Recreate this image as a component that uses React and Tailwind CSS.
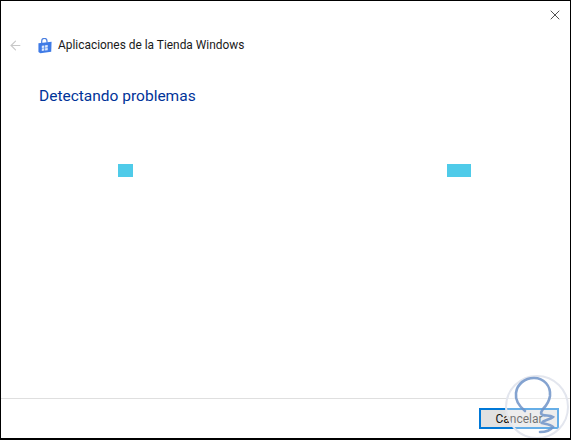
import React from "react";
import { ArrowLeft, X } from "lucide-react";

const StoreIcon = () => (
  <svg width="16" height="16" viewBox="0 0 16 17" className="shrink-0">
    <path d="M4.5 5.5V3.2a2.8 2.8 0 0 1 5.6 0V5" fill="none" stroke="#4a7fe0" strokeWidth="1.3" />
    <path d="M1 5.5L15 4l-.4 10.5L3 16.3 1 15z" fill="#3f7be6" />
    <path d="M4.6 8.2l2.7-.3v2.5l-2.7.2zM8.1 7.8l2.8-.3v2.7l-2.8.2zM4.6 11.1l2.7-.2v2.5l-2.7.3zM8.1 10.8l2.8-.2v2.5l-2.8.3z" fill="#dfeafc" />
  </svg>
);

const Watermark = () => (
  <div className="absolute left-[504px] top-[374px] w-[64px] h-[64px] rounded-full border-2 border-[#e3e6ee] bg-white/40">
    <svg width="64" height="64" viewBox="0 0 64 64" className="absolute -left-[2px] -top-[2px]">
      <path
        d="M20 36C14 31 10 26 11 18 12 9 20 3 29 3c10 0 17 8 16 18-1 6-4 10-7 13-2 3-3 5 0 6 3 1 7 0 10 2-3 3-10 3-11 6 3 1 8 1 11 4-3 4-9 5-13 5"
        fill="none"
        stroke="#6f93c8"
        strokeWidth="2.6"
        strokeLinecap="round"
        opacity="0.85"
      />
    </svg>
  </div>
);

export default function App() {
  return (
    <div className="relative flex flex-col w-[571px] h-[440px] bg-white border-t border-l border-r border-b-2 border-black overflow-hidden font-['Roboto','Liberation_Sans',sans-serif]">
      {/* Close */}
      <div className="flex justify-end h-[30px] pr-[7px] pt-[6px]">
        <X size={16} strokeWidth={1.1} className="text-[#111]" />
      </div>

      {/* Title row */}
      <div className="flex items-center h-[17px] mt-[6px] pl-[7px]">
        <ArrowLeft size={15} strokeWidth={1.8} className="text-[#c8c8c8]" />
        <div className="ml-[14px]">
          <StoreIcon />
        </div>
        <span className="ml-[5px] text-[11.9px] text-[#1a1a1a] whitespace-nowrap">
          Aplicaciones de la Tienda Windows
        </span>
      </div>

      <h1 className="mt-[32px] pl-[38px] text-[15.5px] leading-[20px] text-[#003399] whitespace-nowrap">
        Detectando problemas
      </h1>

      {/* Progress */}
      <div className="flex mt-[58px] pl-[117px]">
        <div className="w-[15px] h-[13px] bg-[#4fcbe9]" />
        <div className="w-[24px] h-[13px] ml-[314px] bg-[#4fcbe9]" />
      </div>

      {/* Footer */}
      <div className="mt-auto border-t border-[#dfdfdf] h-[40px] flex justify-end items-start pt-[9px] pr-[11px]">
        <button className="w-[80px] h-[21px] bg-[#e1e1e1] border-2 border-[#0078d7] text-[12px] leading-[16px] text-[#111]">
          Cancelar
        </button>
      </div>

      <Watermark />
    </div>
  );
}
